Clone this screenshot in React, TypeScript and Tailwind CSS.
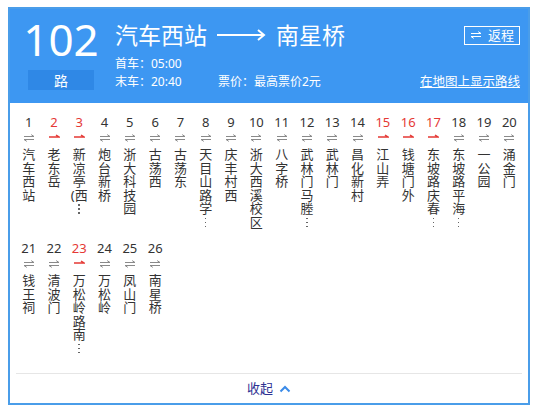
import React from 'react'

// ── Route data ────────────────────────────────────────────────────────────────

type Stop = { no: number; name: string; more?: boolean; oneWay?: boolean }

const stops: Stop[] = [
  { no: 1, name: '汽车西站' },
  { no: 2, name: '老东岳', oneWay: true },
  { no: 3, name: '新凉亭(西', more: true, oneWay: true },
  { no: 4, name: '炮台新桥' },
  { no: 5, name: '浙大科技园' },
  { no: 6, name: '古荡西' },
  { no: 7, name: '古荡东' },
  { no: 8, name: '天目山路学', more: true },
  { no: 9, name: '庆丰村西' },
  { no: 10, name: '浙大西溪校区' },
  { no: 11, name: '八字桥' },
  { no: 12, name: '武林门马塍', more: true },
  { no: 13, name: '武林门' },
  { no: 14, name: '昌化新村' },
  { no: 15, name: '江山弄', oneWay: true },
  { no: 16, name: '钱塘门外', oneWay: true },
  { no: 17, name: '东坡路庆春', more: true, oneWay: true },
  { no: 18, name: '东坡路平海', more: true },
  { no: 19, name: '一公园' },
  { no: 20, name: '涌金门' },
  { no: 21, name: '钱王祠' },
  { no: 22, name: '清波门' },
  { no: 23, name: '万松岭路南', more: true, oneWay: true },
  { no: 24, name: '万松岭' },
  { no: 25, name: '凤山门' },
  { no: 26, name: '南星桥' },
]

// one glyph per line, an opening bracket sticks to the next char
function splitLines(name: string) {
  const out: string[] = []
  let carry = ''
  for (const ch of Array.from(name)) {
    if (ch === '(') { carry += ch; continue }
    out.push(carry + ch)
    carry = ''
  }
  if (carry) out.push(carry)
  return out
}

// ── Icons ─────────────────────────────────────────────────────────────────────

function BothWays({ color = '#8a8a8a' }: { color?: string }) {
  return (
    <svg width="12" height="8" viewBox="0 0 12 8" fill="none">
      <path d="M1 2.5H11L8.2 0.6" stroke={color} strokeWidth="1" />
      <path d="M11 5.5H1L3.8 7.4" stroke={color} strokeWidth="1" />
    </svg>
  )
}

function OneWay() {
  return (
    <svg width="12" height="8" viewBox="0 0 12 8" fill="none">
      <path d="M1 3H11L8 1" stroke="#e53935" strokeWidth="1.5" />
    </svg>
  )
}

function LongArrow() {
  return (
    <svg width="50" height="14" viewBox="0 0 50 14" fill="none">
      <path d="M1 7H48M42 2L48 7L42 12" stroke="#fff" strokeWidth="2" />
    </svg>
  )
}

// vertical ellipsis for cut-off names
function MoreDots() {
  return (
    <div className="mt-[2px] flex flex-col items-center gap-[2.5px]">
      <div className="h-[1.5px] w-[1.5px] bg-[#666]" />
      <div className="h-[1.5px] w-[1.5px] bg-[#666]" />
      <div className="h-[1.5px] w-[1.5px] bg-[#666]" />
    </div>
  )
}

// ── Stop column ───────────────────────────────────────────────────────────────

function StopCol({ stop }: { stop: Stop }) {
  return (
    <div className="flex flex-col items-center">
      <div className={`text-[13px] leading-[16px] ${stop.oneWay ? 'text-[#e53935]' : 'text-[#333]'}`}>
        {stop.no}
      </div>
      <div className="mt-[3px] flex h-[10px] items-center justify-center">
        {stop.oneWay ? <OneWay /> : <BothWays />}
      </div>
      <div className="mt-[5px] flex flex-col items-center text-[13px] leading-[13.5px] text-[#333]">
        {splitLines(stop.name).map((l, i) => (
          <div key={i} className="whitespace-nowrap">{l}</div>
        ))}
        {stop.more && <MoreDots />}
      </div>
    </div>
  )
}

// ── Page ──────────────────────────────────────────────────────────────────────

export default function App() {
  return (
    <div
      className="h-[415px] w-[536px] bg-white pl-[8px] pt-[7px]"
      style={{ fontFamily: '"Noto Sans", "Noto Sans CJK SC", sans-serif' }}
    >
      <div className="flex h-[398px] w-[522px] flex-col border-2 border-[#4a9de9] bg-white">
        {/* Header */}
        <div className="flex h-[94px] bg-[#3d97f2] pt-[8px] text-white">
          <div className="ml-[18px] flex w-[66px] flex-col items-center">
            <div className="text-[44px] leading-[44px]">102</div>
            <div className="mt-[9px] flex h-[20px] w-[66px] items-center justify-center bg-[#2f88e6] text-[14px]">
              路
            </div>
          </div>

          <div className="ml-[21px] mr-[8px] mt-[5px] flex flex-1 flex-col">
            <div className="flex h-[26px] items-center">
              <span className="text-[23px] leading-[26px]">汽车西站</span>
              <span className="ml-[9px] mr-[10px] flex items-center"><LongArrow /></span>
              <span className="text-[23px] leading-[26px]">南星桥</span>
              <button className="ml-auto flex h-[19px] w-[56px] items-center justify-center gap-[6px] border border-white text-[13px] leading-none">
                <BothWays color="#fff" />
                返程
              </button>
            </div>
            <div className="mt-[7px] text-[12px] leading-[17px]">首车：05:00</div>
            <div className="mt-[1px] flex text-[12px] leading-[17px]">
              <span className="w-[103px]">末车：20:40</span>
              <span>票价：最高票价2元</span>
              <span className="ml-auto text-[12.5px] underline">在地图上显示路线</span>
            </div>
          </div>
        </div>

        {/* Stops */}
        <div className="h-[270px] px-[6px] pt-[11px]">
          <div className="grid grid-cols-[repeat(20,minmax(0,1fr))] gap-y-[11px]">
            {stops.map(s => <StopCol key={s.no} stop={s} />)}
          </div>
        </div>

        {/* Collapse */}
        <div className="mx-[6px] flex h-[30px] items-center justify-center gap-[6px] border-t border-[#e6e6e6]">
          <span className="text-[13px] text-[#2e3192]">收起</span>
          <svg width="12" height="8" viewBox="0 0 12 8" fill="none">
            <path d="M1.5 6.5L6 2L10.5 6.5" stroke="#3b8be8" strokeWidth="2" />
          </svg>
        </div>
      </div>
    </div>
  )
}
